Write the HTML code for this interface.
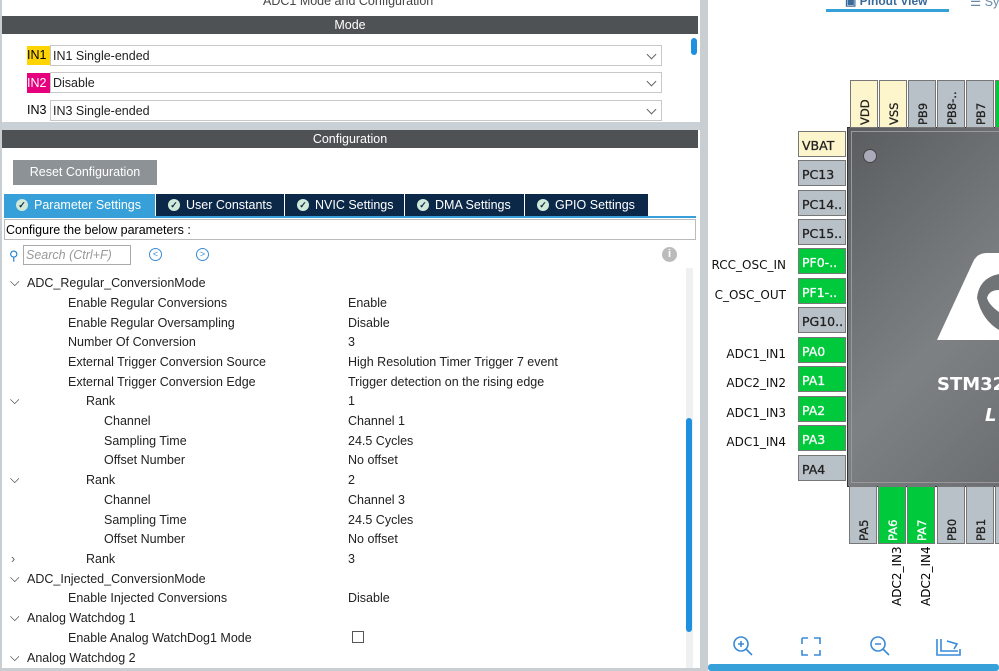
<!DOCTYPE html><html><head><style>
body{margin:0;width:999px;height:671px;overflow:hidden;background:#fff;font-family:"Liberation Sans",sans-serif;position:relative}
.a{position:absolute}
.hdr{position:absolute;left:2px;width:696px;height:18px;background:#4f5254;color:#fff;font-size:12.5px;text-align:center;line-height:18px}
.sel{position:absolute;left:50px;width:612px;height:21px;border:1px solid #c8c8c8;font-size:12.5px;line-height:21px;padding-left:2px;box-sizing:border-box;color:#222}
.sel:after{content:"";position:absolute;right:6px;top:5px;width:6px;height:6px;border-right:1px solid #666;border-bottom:1px solid #666;transform:rotate(45deg)}
.tab{position:absolute;top:194px;height:22px;background:#0c2849;color:#fff;font-size:12.5px;line-height:22px;box-sizing:border-box;padding-left:30px}
.tab:before{content:"✓";position:absolute;left:12px;top:5px;width:12px;height:12px;border-radius:50%;background:#cfe8d8;color:#0c2849;font-size:9px;line-height:12px;text-align:center;font-weight:bold}
.r{position:absolute;font-size:12.5px;color:#222;white-space:nowrap}
.pin{position:absolute;background:#b9c1c8;border:1px solid #777;box-sizing:border-box;font-size:12.5px;color:#222;font-family:"DejaVu Sans",sans-serif;-webkit-text-stroke:0.3px}
.l{width:48px;height:26px;left:798px;line-height:28px;padding-left:3px}
.t{width:28px;height:48px;top:80px}
.b{width:28px;height:58px;top:486px}
.g{background:#00c93b;color:#fff}
.y{background:#fdf5cc}
.vt{position:absolute;transform:rotate(-90deg);transform-origin:left top;white-space:nowrap;font-size:11.5px}
.lab{position:absolute;right:213px;font-size:12px;color:#111;font-family:"DejaVu Sans",sans-serif}
</style></head><body>
<div class="a" style="left:0;top:0;width:700px;height:671px;background:#fff"></div>
<div class="a" style="left:0;top:0;width:2px;height:671px;background:#c9ced3"></div>
<div class="r" style="left:263px;top:-6px;color:#444">ADC1 Mode and Configuration</div>
<div class="hdr" style="top:16px">Mode</div>
<div class="a" style="left:27px;top:46px;width:23px;height:19px;background:#ffd400;font-size:12.5px;line-height:19px">IN1</div>
<div class="sel" style="top:45px">IN1 Single-ended</div>
<div class="a" style="left:27px;top:73px;width:23px;height:20px;background:#e6007e;color:#fff;font-size:12.5px;line-height:20px">IN2</div>
<div class="sel" style="top:72px">Disable</div>
<div class="a" style="left:27px;top:100px;font-size:12.5px;line-height:20px">IN3</div>
<div class="sel" style="top:100px">IN3 Single-ended</div>
<div class="a" style="left:691px;top:38px;width:6px;height:17px;background:#1e90e0;border-radius:3px"></div>
<div class="a" style="left:2px;top:122px;width:698px;height:8px;background:#c9d0d6"></div>
<div class="hdr" style="top:130px">Configuration</div>
<div class="a" style="left:13px;top:160px;width:144px;height:25px;background:#8d9296;color:#fff;font-size:12.5px;line-height:25px;text-align:center">Reset Configuration</div>
<div class="tab" style="left:4px;width:151px;background:#37a0d8">Parameter Settings</div>
<div class="tab" style="left:156px;width:128px">User Constants</div>
<div class="tab" style="left:285px;width:119px">NVIC Settings</div>
<div class="tab" style="left:405px;width:119px">DMA Settings</div>
<div class="tab" style="left:525px;width:123px">GPIO Settings</div>
<div class="a" style="left:4px;top:216px;width:692px;height:2px;background:#37a0d8"></div>
<div class="a" style="left:4px;top:219px;width:692px;height:21px;border:1px solid #bbb;box-sizing:border-box;font-size:12.5px;line-height:20px;padding-left:1px">Configure the below parameters :</div>
<div class="a" style="left:9px;top:248px;color:#1e80d0;font-size:13px">&#9906;</div>
<div class="a" style="left:23px;top:245px;width:108px;height:20px;border:1px solid #aaa;box-sizing:border-box;font-size:12.5px;color:#999;font-style:italic;line-height:19px;padding-left:2px">Search (Ctrl+F)</div>
<div class="a" style="left:149px;top:248px;width:11px;height:11px;border:1px solid #3a8ad8;border-radius:50%;color:#3a8ad8;font-size:9px;line-height:11px;text-align:center">&lt;</div>
<div class="a" style="left:196px;top:248px;width:11px;height:11px;border:1px solid #3a8ad8;border-radius:50%;color:#3a8ad8;font-size:9px;line-height:11px;text-align:center">&gt;</div>
<div class="a" style="left:662px;top:247px;width:15px;height:15px;border-radius:50%;background:#bbb;color:#fff;font-size:11px;font-weight:bold;text-align:center;line-height:15px">i</div>
<div class="a" style="left:686px;top:268px;width:7px;height:400px;background:#eef0f2"></div>
<div class="a" style="left:686px;top:418px;width:6px;height:214px;background:#1e90e0;border-radius:3px"></div>
<div class="a" style="left:0;top:668px;width:700px;height:3px;background:#c9ced3"></div>
<div style="position:absolute;left:0;top:275px">
<div class="r" style="left:10px;top:0">⌵</div><div class="r" style="left:27px;top:1px">ADC_Regular_ConversionMode</div>
<div class="r" style="left:68px;top:21px">Enable Regular Conversions</div><div class="r" style="left:348px;top:21px">Enable</div>
<div class="r" style="left:68px;top:41px">Enable Regular Oversampling</div><div class="r" style="left:348px;top:41px">Disable</div>
<div class="r" style="left:68px;top:60px">Number Of Conversion</div><div class="r" style="left:348px;top:60px">3</div>
<div class="r" style="left:68px;top:80px">External Trigger Conversion Source</div><div class="r" style="left:348px;top:80px">High Resolution Timer Trigger 7 event</div>
<div class="r" style="left:68px;top:100px">External Trigger Conversion Edge</div><div class="r" style="left:348px;top:100px">Trigger detection on the rising edge</div>
<div class="r" style="left:10px;top:118px">⌵</div><div class="r" style="left:86px;top:119px">Rank</div><div class="r" style="left:348px;top:119px">1</div>
<div class="r" style="left:104px;top:139px">Channel</div><div class="r" style="left:348px;top:139px">Channel 1</div>
<div class="r" style="left:104px;top:159px">Sampling Time</div><div class="r" style="left:348px;top:159px">24.5 Cycles</div>
<div class="r" style="left:104px;top:178px">Offset Number</div><div class="r" style="left:348px;top:178px">No offset</div>
<div class="r" style="left:10px;top:197px">⌵</div><div class="r" style="left:86px;top:198px">Rank</div><div class="r" style="left:348px;top:198px">2</div>
<div class="r" style="left:104px;top:218px">Channel</div><div class="r" style="left:348px;top:218px">Channel 3</div>
<div class="r" style="left:104px;top:238px">Sampling Time</div><div class="r" style="left:348px;top:238px">24.5 Cycles</div>
<div class="r" style="left:104px;top:257px">Offset Number</div><div class="r" style="left:348px;top:257px">No offset</div>
<div class="r" style="left:11px;top:277px;color:#666">›</div><div class="r" style="left:86px;top:277px">Rank</div><div class="r" style="left:348px;top:277px">3</div>
<div class="r" style="left:10px;top:296px">⌵</div><div class="r" style="left:27px;top:297px">ADC_Injected_ConversionMode</div>
<div class="r" style="left:68px;top:316px">Enable Injected Conversions</div><div class="r" style="left:348px;top:316px">Disable</div>
<div class="r" style="left:10px;top:335px">⌵</div><div class="r" style="left:27px;top:336px">Analog Watchdog 1</div>
<div class="r" style="left:68px;top:356px">Enable Analog WatchDog1 Mode</div><div class="a" style="left:352px;top:356px;width:10px;height:10px;border:1px solid #555"></div>
<div class="r" style="left:10px;top:375px">⌵</div><div class="r" style="left:27px;top:376px">Analog Watchdog 2</div>
</div>
<div class="a" style="left:700px;top:0;width:8px;height:671px;background:#c9ced3"></div>
<div class="a" style="left:708px;top:0;width:291px;height:671px;background:#fff"></div>
<div class="r" style="left:845px;top:-6px;font-weight:bold;color:#3a6a98;font-size:12px">▣ Pinout View</div>
<div class="a" style="left:826px;top:9px;width:123px;height:3px;background:#37a0d8"></div>
<div class="r" style="left:970px;top:-6px;color:#6a8aa8">☰ Sy</div>
<div class="a" style="left:847px;top:127px;width:160px;height:360px;background:linear-gradient(135deg,#5a5d60,#7d8184 60%,#6b6e71);border:1px solid #333;box-sizing:border-box"></div>
<div class="a" style="left:851px;top:131px;width:160px;height:352px;border:1px solid #999;box-sizing:border-box"></div>
<div class="a" style="left:863px;top:149px;width:12px;height:12px;border-radius:50%;background:#aab;border:1px solid #444"></div>
<svg class="a" style="left:937px;top:250px" width="62" height="92"><path d="M0 90 L36 12 Q40 3 50 3 L62 3 L62 90 Z" fill="#fff"/><path d="M40 48 Q42 28 62 24 L62 40 Q52 40 50 48 Q52 55 62 62 L62 80 Q45 70 40 48Z" fill="#717477"/></svg>
<div class="r" style="left:937px;top:374px;color:#fff;font-weight:bold;font-size:18px;font-family:'DejaVu Sans',sans-serif">STM32</div>
<div class="r" style="left:985px;top:405px;color:#fff;font-weight:bold;font-style:italic;font-size:18px;font-family:'DejaVu Sans',sans-serif">L</div>
<div class="pin l y" style="top:131px">VBAT</div>
<div class="pin l" style="top:160px">PC13</div>
<div class="pin l" style="top:190px">PC14..</div>
<div class="pin l" style="top:219px">PC15..</div>
<div class="pin l g" style="top:248px">PF0-..</div>
<div class="pin l g" style="top:278px">PF1-..</div>
<div class="pin l" style="top:307px">PG10..</div>
<div class="pin l g" style="top:337px">PA0</div>
<div class="pin l g" style="top:366px">PA1</div>
<div class="pin l g" style="top:396px">PA2</div>
<div class="pin l g" style="top:425px">PA3</div>
<div class="pin l" style="top:455px">PA4</div>
<div class="lab" style="top:258px">RCC_OSC_IN</div>
<div class="lab" style="top:288px">C_OSC_OUT</div>
<div class="lab" style="top:347px">ADC1_IN1</div>
<div class="lab" style="top:376px">ADC2_IN2</div>
<div class="lab" style="top:406px">ADC1_IN3</div>
<div class="lab" style="top:435px">ADC1_IN4</div>
<div class="pin t y" style="left:850px"><span class="vt" style="left:7px;top:44px">VDD</span></div>
<div class="pin t y" style="left:879px"><span class="vt" style="left:7px;top:44px">VSS</span></div>
<div class="pin t" style="left:908px"><span class="vt" style="left:7px;top:44px">PB9</span></div>
<div class="pin t" style="left:937px"><span class="vt" style="left:7px;top:44px">PB8-..</span></div>
<div class="pin t" style="left:966px"><span class="vt" style="left:7px;top:44px">PB7</span></div>
<div class="pin t g" style="left:995px"></div>
<div class="pin b" style="left:849px"><span class="vt" style="left:7px;top:54px">PA5</span></div>
<div class="pin b g" style="left:878px"><span class="vt" style="left:7px;top:54px">PA6</span></div>
<div class="pin b g" style="left:907px"><span class="vt" style="left:7px;top:54px">PA7</span></div>
<div class="pin b" style="left:937px"><span class="vt" style="left:7px;top:54px">PB0</span></div>
<div class="pin b" style="left:966px"><span class="vt" style="left:7px;top:54px">PB1</span></div>
<div class="pin b" style="left:995px"></div>
<span class="vt" style="left:890px;top:606px;font-size:12px;font-family:'DejaVu Sans',sans-serif">ADC2_IN3</span>
<span class="vt" style="left:919px;top:606px;font-size:12px;font-family:'DejaVu Sans',sans-serif">ADC2_IN4</span>
<svg class="a" style="left:732px;top:635px" width="240" height="24" fill="none" stroke="#3a8ad8" stroke-width="1.6">
<circle cx="9" cy="9" r="7"/><path d="M14 14 L20 20 M6 9 H12 M9 6 V12"/>
<path d="M70 3 H76 M82 3 H88 V9 M88 15 V20 H82 M76 20 H70 V15 M70 9 V3"/>
<circle cx="146" cy="9" r="7"/><path d="M151 14 L157 20 M143 9 H149"/>
<path d="M205 4 V20 H228 V14 M209 4 V16 H226"/><path d="M215 6 L225 9 L222 14" />
</svg>
<div class="a" style="left:708px;top:664px;width:291px;height:7px;background:#37a0d8;border-radius:3px"></div>
</body></html>
